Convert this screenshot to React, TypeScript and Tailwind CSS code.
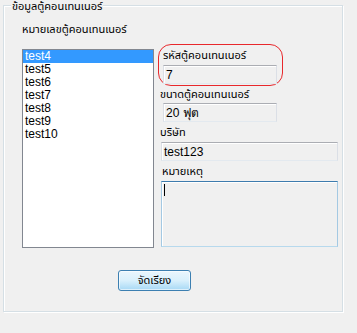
import React from 'react';

const items = ['test4', 'test5', 'test6', 'test7', 'test8', 'test9', 'test10'];

const ui = { fontFamily: 'Tahoma, "Noto Sans Thai", "DejaVu Sans", "Liberation Sans", sans-serif' };
const list = { fontFamily: '"Liberation Sans", Arial, sans-serif' };

function TextBox({ value, w }: { value: string; w: string }) {
  return (
    <div
      className={`${w} h-[19px] border border-t-[#abadb3] border-x-[#dbdfe6] border-b-[#e3e9ef] bg-[#f0f0f0] shadow-[inset_1px_1px_0_#fff] flex items-center pl-[2px] text-[12px] text-black leading-none`}
      style={list}
    >
      {value}
    </div>
  );
}

export default function App() {
  return (
    <div className="w-[357px] h-[333px] bg-[#f0f0f0] pt-[5px] pl-[3px] overflow-hidden text-[11px] text-black" style={ui}>
      <div className="relative w-[340px] h-[307px] border border-[#d5dfe5] shadow-[inset_1px_1px_0_#fff,1px_1px_0_#fff]">
        <span className="absolute left-[7px] -top-[4px] bg-[#f0f0f0] px-[1px] leading-[10px]">ข้อมูลตู้คอนเทนเนอร์</span>

        <div className="flex items-start pt-[17px]">
          <div className="ml-[18px] flex flex-col">
            <div className="h-[13px] leading-[13px]">หมายเลขตู้คอนเทนเนอร์</div>
            <div className="mt-[13px] w-[132px] h-[199px] border border-[#828790] bg-white" style={list}>
              {items.map((t, i) => (
                <div
                  key={t}
                  className={`h-[13px] leading-[13px] pl-[2px] text-[12px] ${i === 0 ? 'bg-[#3399ff] text-white' : 'text-black'}`}
                >
                  {t}
                </div>
              ))}
            </div>
          </div>

          <div className="ml-[4px] mt-[21px] flex flex-col">
            <div className="w-[125px] h-[42px] border border-[#e8282c] rounded-[13px] pt-[4px] pl-[4px]">
              <div className="h-[13px] leading-[13px]">รหัสตู้คอนเทนเนอร์</div>
              <div className="mt-[3px]">
                <TextBox value="7" w="w-[114px]" />
              </div>
            </div>

            <div className="mt-[2px] ml-[2px] h-[13px] leading-[13px]">ขนาดตู้คอนเทนเนอร์</div>
            <div className="mt-[2px] ml-[5px]">
              <TextBox value="20 ฟุต" w="w-[114px]" />
            </div>

            <div className="mt-[4px] ml-[2px] h-[13px] leading-[13px]">บริษัท</div>
            <div className="mt-[3px] ml-[3px]">
              <TextBox value="test123" w="w-[177px]" />
            </div>

            <div className="mt-[4px] ml-[4px] h-[13px] leading-[13px]">หมายเหตุ</div>
            <div className="mt-[3px] ml-[3px] w-[177px] h-[66px] border border-t-[#3d7bad] border-x-[#a4c9e3] border-b-[#b7d9ed] bg-[#f0f0f0] shadow-[inset_1px_1px_0_#fff] pt-[2px] pl-[2px]">
              <div className="w-[1px] h-[12px] bg-black" />
            </div>
          </div>
        </div>

        <button className="mt-[22px] ml-[114px] w-[73px] h-[21px] rounded-[3px] border border-[#3c7fb1] bg-gradient-to-b from-[#eaf6fd] via-[#d9f0fc] to-[#a7d9f5] shadow-[inset_0_0_0_1px_rgba(255,255,255,0.6)] text-[11px] leading-none text-black">
          จัดเรียง
        </button>
      </div>
    </div>
  );
}
